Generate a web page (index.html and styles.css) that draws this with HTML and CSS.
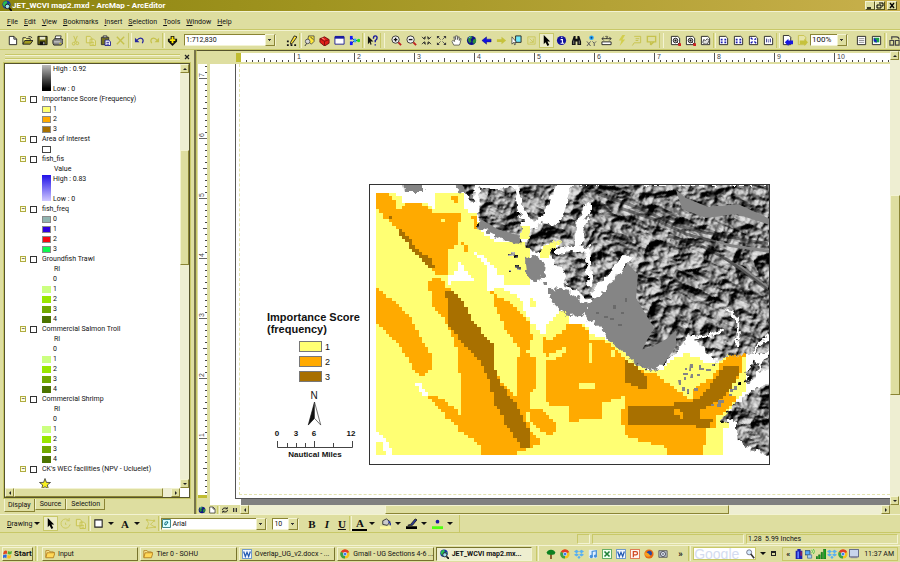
FILE: index.html
```
<!DOCTYPE html>
<html lang="en">
<head>
<meta charset="utf-8">
<title>JET_WCVI map2.mxd - ArcMap - ArcEditor</title>
<link rel="stylesheet" href="styles.css">
</head>
<body>
<svg class="defs" aria-hidden="true">
  <symbol id="i-globe" viewBox="0 0 12 12"><circle cx="6" cy="6" r="5" fill="#10108c"/><path d="M3 2l3-1 1 2-2 2 1 2-2 2-2-3zM8 5l3-1v3l-2 3-2-2z" fill="#2a8a3c"/><path d="M3 3l2-1" stroke="#7fd0ff"/></symbol>
  <symbol id="i-arc" viewBox="0 0 12 12"><circle cx="6" cy="5" r="4.500" fill="#1830a0"/><path d="M3 2l3-1 1 2-2 2 1 2-2 1-2-3zM8 4l2 0-1 3-1-1z" fill="#28c050"/><circle cx="7" cy="7" r="2.500" fill="#9fe0f0" stroke="#222"/><path d="M9 9l3 3" stroke="#111" stroke-width="2"/></symbol>
  <symbol id="i-new" viewBox="0 0 12 12"><path d="M2.500 1.500h5l3 3v6h-8z" fill="#fff" stroke="#222"/><path d="M7.500 1.500v3h3" fill="none" stroke="#222"/></symbol>
  <symbol id="i-open" viewBox="0 0 12 12"><path d="M1 10V3h3l1 1h4v2" fill="#ffff90" stroke="#222"/><path d="M1 10l2-4h9l-3 4z" fill="#a09a20" stroke="#222"/><path d="M7 2q2-1 4 1" fill="none" stroke="#222"/></symbol>
  <symbol id="i-save" viewBox="0 0 12 12"><path d="M1 1.500h10v9H1z" fill="#6b6a10" stroke="#111"/><path d="M3 2h6v3H3z" fill="#e8e8d0"/><path d="M3 7h6v4H3z" fill="#111"/><path d="M7 8h1v2H7z" fill="#fff"/></symbol>
  <symbol id="i-print" viewBox="0 0 12 12"><path d="M4 1h6L9 5H3z" fill="#fff" stroke="#333"/><path d="M1 6l2-2h7l2 1v4l-2 2H2L1 9z" fill="#888" stroke="#222"/><path d="M2 7h7v1H2z" fill="#ddd"/><path d="M8 9h2v1H8z" fill="#dd0"/></symbol>
  <symbol id="i-cut" viewBox="0 0 12 12"><path d="M4 1l3 7M8 1L5 8" stroke="#c6c24c" fill="none"/><circle cx="4" cy="9.500" r="1.500" fill="none" stroke="#c6c24c"/><circle cx="8" cy="9" r="1.500" fill="none" stroke="#c6c24c"/></symbol>
  <symbol id="i-copy" viewBox="0 0 12 12"><path d="M1.500 1.500h4l2 2v5h-6zM5.500 4.500h4l2 2v5h-6z" fill="#e6e4a8" stroke="#c6c24c"/><path d="M7 8h3M7 10h3" stroke="#c6c24c"/></symbol>
  <symbol id="i-paste" viewBox="0 0 12 12"><path d="M1.500 2.500h8v8h-8z" fill="#77731c" stroke="#333"/><path d="M3.500 1h4v2h-4z" fill="#ddd" stroke="#333"/><path d="M5.500 5.500h4l2 2v4h-6z" fill="#fff" stroke="#1c1c90"/><path d="M7 8h3M7 10h3" stroke="#1c1c90"/></symbol>
  <symbol id="i-x" viewBox="0 0 12 12"><path d="M2 2l8 8M10 2l-8 8" stroke="#c6c24c" stroke-width="1.500"/></symbol>
  <symbol id="i-undo" viewBox="0 0 12 12"><path d="M3 6q3-4 6-2 2 2 0 5" fill="none" stroke="#2626a0" stroke-width="1.300"/><path d="M1 3v5h5z" fill="#2626a0"/></symbol>
  <symbol id="i-redo" viewBox="0 0 12 12"><path d="M9 6Q6 2 3 4q-2 2 0 5" fill="none" stroke="#c6c24c" stroke-width="1.300"/><path d="M11 3v5H6z" fill="#c6c24c"/></symbol>
  <symbol id="i-add" viewBox="0 0 12 12"><path d="M4 1h4v3h3v3L6 12 1 7V4h3z" fill="#111"/><path d="M6 2v7M3 5.500h6" stroke="#ffe800" stroke-width="2"/></symbol>
  <symbol id="i-edit" viewBox="0 0 12 12"><path d="M1 10h2v2H1zM5 10h2v2H5zM9 10h2v2H9zM1 6h2v2H1z" fill="#111"/><path d="M5 8l4-7 3 1-5 7-2 1z" fill="#ffe030" stroke="#222"/></symbol>
  <symbol id="i-cat" viewBox="0 0 12 12"><path d="M5 1h6v6l-3 3-4-4z" fill="#ffe838" stroke="#554"/><circle cx="4" cy="7" r="2.500" fill="#d8d8d8" stroke="#555"/><path d="M3 9l-2 3M7 2l3 3" stroke="#333"/></symbol>
  <symbol id="i-box" viewBox="0 0 12 12"><path d="M1 4l5-2 5 3v4l-5 3-5-4z" fill="#e02018" stroke="#701010"/><path d="M1 4l5 3 5-2M6 7v5" stroke="#801010" fill="none"/><path d="M3 3l3 2" stroke="#ffb0a0"/></symbol>
  <symbol id="i-cmd" viewBox="0 0 12 12"><path d="M1 2h10v8H1z" fill="#fff" stroke="#1c1c90"/><path d="M1 1h10v3H1z" fill="#1c1ca0"/></symbol>
  <symbol id="i-model" viewBox="0 0 12 12"><path d="M3 3l3 3M3 9l3-3h4" stroke="#222" fill="none"/><path d="M1 1h3v4H1z" fill="#1818ff"/><path d="M1 7h3v4H1z" fill="#1818ff"/><path d="M5 4h3v4H5z" fill="#30a8ff"/><circle cx="10.500" cy="6" r="1.800" fill="#20e020"/></symbol>
  <symbol id="i-help" viewBox="0 0 12 12"><path d="M1 1v9l2-2 1 3 1-1-1-3h3z" fill="#111"/><path d="M7 4q0-3 2-3t2 2-2 3v2M9 10v1.500" fill="none" stroke="#18189c" stroke-width="1.500"/></symbol>
  <symbol id="i-zin" viewBox="0 0 12 12"><circle cx="5" cy="5" r="4" fill="#f4f4f4" stroke="#333"/><path d="M3 5h4M5 3v4" stroke="#111" stroke-width="1.500"/><path d="M8 8l3 3" stroke="#c02020" stroke-width="2"/></symbol>
  <symbol id="i-zout" viewBox="0 0 12 12"><circle cx="5" cy="5" r="4" fill="#f4f4f4" stroke="#333"/><path d="M3 5h4" stroke="#111" stroke-width="1.500"/><path d="M8 8l3 3" stroke="#c02020" stroke-width="2"/></symbol>
  <symbol id="i-fin" viewBox="0 0 12 12"><path d="M1 2l3 3M11 2L8 5M1 10l3-3M11 10L8 7" stroke="#333"/><path d="M2 4h3V1zM10 4H7V1zM2 8h3v3zM10 8H7v3z" fill="#222"/></symbol>
  <symbol id="i-fout" viewBox="0 0 12 12"><path d="M1 1h3L1 4zM11 1H8l3 3zM1 11h3L1 8zM11 11H8l3-3z" fill="#333"/><path d="M2 2l3 3M10 2L7 5M2 10l3-3M10 10L7 7" stroke="#555"/></symbol>
  <symbol id="i-pan" viewBox="0 0 12 12"><path d="M3 11L1 7l1-1 2 1-1-5h1l1 3V1h2v4l1-3h1v4l1-2h1l-1 5-1 2z" fill="#fff" stroke="#444" stroke-width=".8"/></symbol>
  <symbol id="i-back" viewBox="0 0 12 12"><path d="M1 6l5-4v2.500h5v3H6V10z" fill="#1010e0" stroke="#101070" stroke-width=".5"/></symbol>
  <symbol id="i-fwd" viewBox="0 0 12 12"><path d="M11 6L6 2v2.500H1v3h5V10z" fill="#c6c23c"/></symbol>
  <symbol id="i-selfeat" viewBox="0 0 12 12"><path d="M5 1h6v7H5z" fill="#70e8f8" stroke="#222"/><path d="M1 2v8l2-2 1 3 1-1-1-2h2z" fill="#fff" stroke="#222" stroke-width=".7"/></symbol>
  <symbol id="i-clear" viewBox="0 0 12 12"><path d="M2 2h8v8H2zM4 4l4 4M8 4v4H4" fill="none" stroke="#ccc85c"/></symbol>
  <symbol id="i-arrow" viewBox="0 0 12 12"><path d="M3 0v10l2-2 2 4 2-1-2-4h3z" fill="#000"/></symbol>
  <symbol id="i-info" viewBox="0 0 12 12"><circle cx="6" cy="6" r="5" fill="#10109c"/><path d="M5 5h2v4M5 9h4M5.500 2.500h1.500" stroke="#fff" stroke-width="1.200" fill="none"/></symbol>
  <symbol id="i-find" viewBox="0 0 12 12"><path d="M3 1h2v3h2V1h2l2 6v4H7V7H5v4H1V7z" fill="#111"/><path d="M3 6v4M9 6v4" stroke="#888"/></symbol>
  <symbol id="i-xy" viewBox="0 0 12 12"><circle cx="6" cy="3" r="2.500" fill="#28a8f8"/><circle cx="6" cy="3" r="1" fill="#104080"/><path d="M1 7l4 5M5 7l-4 5M7 7l2 2 2-2M9 9v3" stroke="#555" fill="none"/></symbol>
  <symbol id="i-meas" viewBox="0 0 12 12"><path d="M1 7.500h10v3H1z" fill="#fff" stroke="#222"/><path d="M1 4h10M3 2L1 4l2 2M9 2l2 2-2 2" fill="none" stroke="#333"/><path d="M5 2q1-2 2 0l-1 2" fill="none" stroke="#222"/></symbol>
  <symbol id="i-bolt" viewBox="0 0 12 12"><path d="M7 0L3 6h3l-2 6 6-7H7l3-5z" fill="#d2ce4c"/></symbol>
  <symbol id="i-html" viewBox="0 0 12 12"><path d="M3.500 1.500h7v7h-7l-2 3M5 4h4M5 6h3" fill="none" stroke="#c6c24c"/></symbol>
  <symbol id="i-view" viewBox="0 0 12 12"><path d="M1.500 1.500h9v6h-9zM5 7v4M5 11l4-4" fill="none" stroke="#c6c24c" stroke-width="1.500"/></symbol>
  <symbol id="i-pzin" viewBox="0 0 12 12"><path d="M1.500 1.500h7l2 2v7h-9z" fill="#fff" stroke="#222"/><circle cx="6" cy="6" r="2.500" fill="#bbb" stroke="#222"/><path d="M6 5v2M5 6h2M8 8l2 2" stroke="#111"/><path d="M9 9h3v3H9z" fill="#d02020"/></symbol>
  <symbol id="i-ppan" viewBox="0 0 12 12"><path d="M1.500 1.500h7l2 2v7h-9z" fill="#fff" stroke="#222"/><path d="M3 8l1-3 2 1 2-2 2 2-2 4H5z" fill="#ddd" stroke="#444"/></symbol>
  <symbol id="i-pfull" viewBox="0 0 12 12"><path d="M1.500 1.500h7l2 2v7h-9z" fill="#fff" stroke="#222"/><path d="M3 4h2v2H3zM7 4h2v2H7zM3 7h2v2H3zM7 7h2v2H7z" fill="#1c1cb0"/></symbol>
  <symbol id="i-pext" viewBox="0 0 12 12"><path d="M1.500 1.500h7l2 2v7h-9z" fill="#fff" stroke="#222"/><path d="M3 3l2 2M9 4L7 5M3 9l2-2M9 9L7 7" stroke="#1c1cb0" stroke-width="1.500"/></symbol>
  <symbol id="i-p11" viewBox="0 0 12 12"><path d="M1.500 1.500h7l2 2v7h-9z" fill="#fff" stroke="#222"/><path d="M4 4v4M8 4v4M6 5v1M6 7v1" stroke="#1c1c80"/></symbol>
  <symbol id="i-pback" viewBox="0 0 12 12"><path d="M1.500 .5h6l2 2v8h-8z" fill="#fff" stroke="#222"/><path d="M3 8l4-4v2h5v4H7v2z" fill="#1818e0"/></symbol>
  <symbol id="i-pfwd" viewBox="0 0 12 12"><path d="M1.500 .5h6l2 2v8h-8z" fill="#e6e4a8" stroke="#c6c24c"/><path d="M12 8L8 4v2H3v4h5v2z" fill="#c6c23c"/></symbol>
  <symbol id="i-draft" viewBox="0 0 12 12"><path d="M1.500 1.500h9v9h-9z" fill="#fff" stroke="#222"/><path d="M3 4h6M3 6h6M3 8h6" stroke="#888"/></symbol>
  <symbol id="i-focus" viewBox="0 0 12 12"><path d="M1.500 1.500h9v9h-9z" fill="#fff" stroke="#222"/><path d="M3 3h6v5H3z" fill="#18a048"/><path d="M3 3l3 3v3l-3-3z" fill="#1818d0"/></symbol>
  <symbol id="i-layout" viewBox="0 0 12 12"><path d="M3 5V2h5q3 0 3 3M1 6h4v5H1zM7 6h4v5H7z" fill="none" stroke="#444" stroke-width="1.300"/></symbol>
  <symbol id="i-rot" viewBox="0 0 12 12"><path d="M10 3a5 5 0 1 0 1 4M10 0v3H7M6 5v2h1" fill="none" stroke="#ccc85c"/></symbol>
  <symbol id="i-sq" viewBox="0 0 12 12"><path d="M2 2h8v8H2z" fill="#fff" stroke="#222" stroke-width="1.200"/></symbol>
  <symbol id="i-nodes" viewBox="0 0 12 12"><path d="M2 2l8 1-4 4 5 3-9 1 2-5z" fill="none" stroke="#ccc85c"/><path d="M1 1h2v2H1zM9 2h2v2H9zM1 10h2v2H1zM10 9h2v2h-2z" fill="#ccc85c"/></symbol>
  <symbol id="i-fill" viewBox="0 0 12 12"><path d="M3 3l4-2 4 3-3 4-5-1z" fill="#ccc" stroke="#333"/><path d="M9 4q3 1 2 4" fill="none" stroke="#2030a0" stroke-width="1.500"/><path d="M0 9h12v3H0z" fill="#fdf9a0"/></symbol>
  <symbol id="i-line" viewBox="0 0 12 12"><path d="M2 8l3-1 5-6 2 1-5 6z" fill="#2838a0" stroke="#222"/><path d="M0 9h12v3H0z" fill="#000"/></symbol>
  <symbol id="i-dot" viewBox="0 0 12 12"><circle cx="6" cy="4" r="2" fill="#1818a0"/><path d="M0 9h12v3H0z" fill="#50ff10"/></symbol>
  <symbol id="i-win" viewBox="0 0 12 12"><path d="M1 3q2-2 4-.5L4.500 6Q3 5 0 6.500z" fill="#e04820"/><path d="M6 2.500q3 1.500 5-.5l-1 4q-2 1-4.500 0z" fill="#58b030"/><path d="M0 7.500Q3 6 4.500 7L4 11Q2 9.500 0 11z" fill="#3068e0"/><path d="M5.500 7q2 1.500 4.500 0l-1 4q-2 1-4 0z" fill="#f8c020"/></symbol>
  <symbol id="i-folder" viewBox="0 0 12 12"><path d="M1 10V2h4l1 1.500h4V5" fill="#fff2a0" stroke="#b07818"/><path d="M1 10.500l1.500-6H12l-2 6z" fill="#ffd858" stroke="#b07818"/></symbol>
  <symbol id="i-word" viewBox="0 0 12 12"><path d="M.5.5h11v11H.5z" fill="#f2f7ff" stroke="#4a80c8"/><path d="M2 3l2 6 2-5 2 5 2-6" fill="none" stroke="#2058b0" stroke-width="1.500"/></symbol>
  <symbol id="i-chrome" viewBox="0 0 12 12"><circle cx="6" cy="6" r="5.500" fill="#f0c420"/><path d="M6 6L1 3.300A5.500 5.500 0 0 1 11 3.500z" fill="#e03c28"/><path d="M6 6L1 3.300A5.500 5.500 0 0 0 6 11.500z" fill="#3aa048"/><circle cx="6" cy="6" r="2.500" fill="#fff"/><circle cx="6" cy="6" r="1.900" fill="#4080e8"/></symbol>
  <symbol id="i-tree" viewBox="0 0 12 12"><path d="M5 6h2v6H5z" fill="#7a4a18"/><path d="M1 4q1-3 5-3t5 3q0 3-3 3H4Q1 7 1 4z" fill="#0c8020"/></symbol>
  <symbol id="i-drop" viewBox="0 0 12 12"><path d="M3 1l3 2-3 2-3-2zM9 1l3 2-3 2-3-2zM3 5l3 2-3 2-3-2zM9 5l3 2-3 2-3-2zM6 8l2 2-2 2-2-2z" fill="#58b0f0"/></symbol>
  <symbol id="i-music" viewBox="0 0 12 12"><path d="M1 1h10v10H1z" fill="#e0efff"/><path d="M5 9V3l5-1v6" fill="none" stroke="#4890d8" stroke-width="1.500"/><circle cx="4" cy="9" r="2" fill="#4890d8"/><circle cx="9" cy="8.500" r="2" fill="#4890d8"/></symbol>
  <symbol id="i-excel" viewBox="0 0 12 12"><path d="M.5.5h11v11H.5z" fill="#f2fff2" stroke="#3c9848"/><path d="M3 3l6 6M9 3L3 9" stroke="#208038" stroke-width="2"/></symbol>
  <symbol id="i-ppt" viewBox="0 0 12 12"><path d="M.5.5h11v11H.5z" fill="#fff4f0" stroke="#d85830"/><path d="M4 10V3h3q2 0 2 2T7 7H4" fill="none" stroke="#d04820" stroke-width="1.500"/></symbol>
  <symbol id="i-fox" viewBox="0 0 12 12"><circle cx="6" cy="6" r="5.500" fill="#e86a10"/><circle cx="6.500" cy="5" r="3" fill="#2848a0"/><path d="M1 4q2 1 4 1l3 3q-4 3-7-1z" fill="#f8a020"/></symbol>
  <symbol id="i-cam" viewBox="0 0 12 12"><path d="M1 2h10v8H1z" fill="#b8c0c8" stroke="#555"/><circle cx="6" cy="6" r="3" fill="#e8f0f8" stroke="#334"/><circle cx="6" cy="6" r="1" fill="#224"/></symbol>
  <symbol id="i-search" viewBox="0 0 12 12"><circle cx="5" cy="4" r="3" fill="#d8ecff" stroke="#667"/><path d="M7 6l4 5" stroke="#333" stroke-width="2"/></symbol>
  <symbol id="i-batt" viewBox="0 0 12 12"><path d="M4 0h4v2h2v10H2V2h2z" fill="#1c20b0"/><path d="M4 3h2v8H4z" fill="#6080ff"/><path d="M8 3h1v5H8z" fill="#e02020"/></symbol>
  <symbol id="i-net" viewBox="0 0 12 12"><path d="M0 2h6v5H0z" fill="#58a8f8" stroke="#246"/><path d="M3 7h5v4H3z" fill="#a8d0f8" stroke="#579"/><path d="M8 1q2 2 0 4M10 0q3 3 0 6" fill="none" stroke="#40c040"/></symbol>
  <symbol id="i-bars" viewBox="0 0 12 12"><path d="M0 9h2v3H0zM3 7h2v5H3zM6 4h2v8H6zM9 0h3v12H9z" fill="#1aa020" stroke="#0a5010" stroke-width=".5"/></symbol>
  <symbol id="i-mon" viewBox="0 0 12 12"><path d="M.5.500h11v9H.5z" fill="#c8d4ec" stroke="#444c78"/><path d="M2 9h8v2H2z" fill="#889"/></symbol>
  <symbol id="i-refresh" viewBox="0 0 12 12"><path d="M2 6q1-4 5-3l2 1M10 6q-1 4-5 3l-2-1" fill="none" stroke="#222" stroke-width="1.500"/><path d="M10 1v4H6zM2 11V7h4z" fill="#222"/></symbol>
  <symbol id="i-pause" viewBox="0 0 12 12"><path d="M3 3h2v6H3zM7 3h2v6H7z" fill="#333"/></symbol>
</svg>

<div class="app">
  <header class="titlebar">
    <svg class="ico"><use href="#i-arc"/></svg>
    <h1>JET_WCVI map2.mxd - ArcMap - ArcEditor</h1>
    <div class="winbtns">
      <button aria-label="Minimize"><svg viewBox="0 0 8 7"><path d="M1 6h4" stroke="#000" stroke-width="1.500"/></svg></button>
      <button aria-label="Restore"><svg viewBox="0 0 8 7"><path d="M3 1h4v3H6M1 3h4v3H1z" fill="none" stroke="#000"/></svg></button>
      <button class="close" aria-label="Close"><svg viewBox="0 0 8 7"><path d="M2 1l4 5M6 1L2 6" stroke="#000" stroke-width="1.300"/></svg></button>
    </div>
  </header>

  <nav class="menubar">
    <a href="#"><u>F</u>ile</a><a href="#"><u>E</u>dit</a><a href="#"><u>V</u>iew</a><a href="#"><u>B</u>ookmarks</a><a href="#"><u>I</u>nsert</a><a href="#"><u>S</u>election</a><a href="#"><u>T</u>ools</a><a href="#"><u>W</u>indow</a><a href="#"><u>H</u>elp</a>
  </nav>

  <div class="toolbar">
    <button aria-label="New"><svg><use href="#i-new"/></svg></button>
    <button aria-label="Open"><svg><use href="#i-open"/></svg></button>
    <button aria-label="Save"><svg><use href="#i-save"/></svg></button>
    <button aria-label="Print"><svg><use href="#i-print"/></svg></button>
    <i class="sep"></i>
    <button aria-label="Cut"><svg><use href="#i-cut"/></svg></button>
    <button aria-label="Copy"><svg><use href="#i-copy"/></svg></button>
    <button aria-label="Paste"><svg><use href="#i-paste"/></svg></button>
    <button aria-label="Delete"><svg><use href="#i-x"/></svg></button>
    <i class="sep wide"></i>
    <button aria-label="Undo"><svg><use href="#i-undo"/></svg></button>
    <button aria-label="Redo"><svg><use href="#i-redo"/></svg></button>
    <i class="sep"></i>
    <button aria-label="Add data"><svg><use href="#i-add"/></svg></button>
    <span class="combo scale"><select aria-label="Map scale"><option>1:712,830</option></select></span>
    <button aria-label="Editor"><svg><use href="#i-edit"/></svg></button>
    <i class="sep"></i>
    <button aria-label="Catalog"><svg><use href="#i-cat"/></svg></button>
    <button aria-label="Toolbox"><svg><use href="#i-box"/></svg></button>
    <button aria-label="Command line"><svg><use href="#i-cmd"/></svg></button>
    <button aria-label="Model"><svg><use href="#i-model"/></svg></button>
    <i class="sep"></i>
    <button aria-label="What's this"><svg><use href="#i-help"/></svg></button>
    <i class="sep grip"></i>
    <button aria-label="Zoom in"><svg><use href="#i-zin"/></svg></button>
    <button aria-label="Zoom out"><svg><use href="#i-zout"/></svg></button>
    <button aria-label="Fixed zoom in"><svg><use href="#i-fin"/></svg></button>
    <button aria-label="Fixed zoom out"><svg><use href="#i-fout"/></svg></button>
    <button aria-label="Pan"><svg><use href="#i-pan"/></svg></button>
    <button aria-label="Full extent"><svg><use href="#i-globe"/></svg></button>
    <button aria-label="Back"><svg><use href="#i-back"/></svg></button>
    <button aria-label="Forward"><svg><use href="#i-fwd"/></svg></button>
    <button aria-label="Select features"><svg><use href="#i-selfeat"/></svg></button>
    <button aria-label="Clear selection"><svg><use href="#i-clear"/></svg></button>
    <button class="on" aria-label="Select elements"><svg><use href="#i-arrow"/></svg></button>
    <button aria-label="Identify"><svg><use href="#i-info"/></svg></button>
    <button aria-label="Find"><svg><use href="#i-find"/></svg></button>
    <button aria-label="Go to XY"><svg><use href="#i-xy"/></svg></button>
    <button aria-label="Measure"><svg><use href="#i-meas"/></svg></button>
    <button aria-label="Hyperlink"><svg><use href="#i-bolt"/></svg></button>
    <button aria-label="HTML popup"><svg><use href="#i-html"/></svg></button>
    <button aria-label="Viewer"><svg><use href="#i-view"/></svg></button>
    <i class="sep grip"></i>
    <button aria-label="Page zoom in"><svg><use href="#i-pzin"/></svg></button>
    <button aria-label="Page zoom out"><svg><use href="#i-pzin"/></svg></button>
    <button aria-label="Page pan"><svg><use href="#i-ppan"/></svg></button>
    <i class="sep"></i>
    <button aria-label="Page fixed zoom in"><svg><use href="#i-pfull"/></svg></button>
    <button aria-label="Page fixed zoom out"><svg><use href="#i-pfull"/></svg></button>
    <button aria-label="Whole page"><svg><use href="#i-pext"/></svg></button>
    <button aria-label="Zoom 100%"><svg><use href="#i-p11"/></svg></button>
    <i class="sep wide"></i>
    <button aria-label="Previous page extent"><svg><use href="#i-pback"/></svg></button>
    <button aria-label="Next page extent"><svg><use href="#i-pfwd"/></svg></button>
    <span class="combo pct"><select aria-label="Page zoom"><option>100%</option></select></span>
    <button aria-label="Draft mode"><svg><use href="#i-draft"/></svg></button>
    <button aria-label="Focus data frame"><svg><use href="#i-focus"/></svg></button>
    <i class="sep"></i>
    <button aria-label="Change layout"><svg><use href="#i-layout"/></svg></button>
  </div>

  <main class="work">
    <aside class="toc">
      <div class="dockbar"><i></i><button aria-label="Close panel"><svg viewBox="0 0 6 6"><path d="M1 1l4 4M5 1L1 5" stroke="#222" stroke-width="1.200"/></svg></button></div>
      <div class="treebox">
        <ul class="tree">
          <li class="ramp-row"><i class="ramp gray"></i><span class="hl"><b>High : 0.92</b><b>Low : 0</b></span></li>
          <li class="layer"><button>−</button><label><input type="checkbox">Importance Score (Frequency)</label></li>
          <li class="cls"><i class="sw c1"></i>1</li>
          <li class="cls"><i class="sw c2"></i>2</li>
          <li class="cls"><i class="sw c3"></i>3</li>
          <li class="layer"><button>−</button><label><input type="checkbox">Area of Interest</label></li>
          <li class="cls"><i class="sw hollow"></i></li>
          <li class="layer"><button>−</button><label><input type="checkbox">fish_fis</label></li>
          <li class="field">Value</li>
          <li class="ramp-row"><i class="ramp blue"></i><span class="hl"><b>High : 0.83</b><b>Low : 0</b></span></li>
          <li class="layer"><button>−</button><label><input type="checkbox">fish_freq</label></li>
          <li class="cls"><i class="sw f0"></i>0</li>
          <li class="cls"><i class="sw f1"></i>1</li>
          <li class="cls"><i class="sw f2"></i>2</li>
          <li class="cls"><i class="sw f3"></i>3</li>
          <li class="layer"><button>−</button><label><input type="checkbox">Groundfish Trawl</label></li>
          <li class="field">RI</li>
          <li class="cls"><i class="sw none"></i>0</li>
          <li class="cls"><i class="sw flat g1"></i>1</li>
          <li class="cls"><i class="sw flat g2"></i>2</li>
          <li class="cls"><i class="sw flat g3"></i>3</li>
          <li class="cls"><i class="sw flat g4"></i>4</li>
          <li class="layer"><button>−</button><label><input type="checkbox">Commercial Salmon Troll</label></li>
          <li class="field">RI</li>
          <li class="cls"><i class="sw none"></i>0</li>
          <li class="cls"><i class="sw flat g1"></i>1</li>
          <li class="cls"><i class="sw flat g2"></i>2</li>
          <li class="cls"><i class="sw flat g3"></i>3</li>
          <li class="cls"><i class="sw flat g4"></i>4</li>
          <li class="layer"><button>−</button><label><input type="checkbox">Commercial Shrimp</label></li>
          <li class="field">RI</li>
          <li class="cls"><i class="sw none"></i>0</li>
          <li class="cls"><i class="sw flat g1"></i>1</li>
          <li class="cls"><i class="sw flat g2"></i>2</li>
          <li class="cls"><i class="sw flat g3"></i>3</li>
          <li class="cls"><i class="sw flat g4"></i>4</li>
          <li class="layer"><button>−</button><label><input type="checkbox">CK's WEC facilities (NPV - Ucluelet)</label></li>
          <li class="star"><svg viewBox="0 0 12 12"><path d="M6 .5l1.400 3.900 4.100.1-3.200 2.500 1.100 4L6 8.700 2.600 11l1.100-4L.5 4.500l4.100-.1z" fill="#f8f020" stroke="#333" stroke-width=".8"/></svg></li>
        </ul>
        <div class="vbar"><button class="up" aria-label="Scroll up"></button><i class="gap-a"></i><i class="thumb"></i><i class="gap-b"></i><button class="down" aria-label="Scroll down"></button></div>
        <div class="hbar"><button class="left" aria-label="Scroll left"></button><i class="thumb"></i><i class="gap-a"></i><button class="right" aria-label="Scroll right"></button></div>
      </div>
      <div class="tabs"><button class="cur">Display</button><button>Source</button><button>Selection</button></div>
    </aside>

    <section class="view">
      <svg class="hruler"><defs>
        <pattern id="hm" x="-1" width="6" height="9" patternUnits="userSpaceOnUse"><path d="M0 7h1v2H0z" fill="#444"/></pattern>
        <pattern id="hh" x="23" width="60" height="9" patternUnits="userSpaceOnUse"><path d="M0 5h1v4H0z" fill="#555"/><path d="M30 0h1v9h-1z" fill="#555"/></pattern></defs>
        <rect width="100%" height="9" fill="#fff"/><rect width="100%" height="9" fill="url(#hm)"/><rect width="100%" height="9" fill="url(#hh)"/>
        <g><text x="56" y="6">1</text><text x="116" y="6">2</text><text x="176" y="6">3</text><text x="236" y="6">4</text><text x="296" y="6">5</text><text x="356" y="6">6</text><text x="416" y="6">7</text><text x="476" y="6">8</text><text x="536" y="6">9</text><text x="596" y="6">10</text></g>
      </svg>
      <svg class="vruler"><defs>
        <pattern id="vm" y="2" width="9" height="6" patternUnits="userSpaceOnUse"><path d="M7 0h2v1H7z" fill="#444"/></pattern>
        <pattern id="vh" y="14" width="9" height="60" patternUnits="userSpaceOnUse"><path d="M1 0h8v1H1z" fill="#666"/><path d="M5 30h4v1H5z" fill="#555"/></pattern></defs>
        <rect width="9" height="100%" fill="#fff"/><rect width="9" height="100%" fill="url(#vm)"/><rect width="9" height="100%" fill="url(#vh)"/>
        <g><text transform="translate(6 13) rotate(-90)">7</text><text transform="translate(6 73) rotate(-90)">6</text><text transform="translate(6 133) rotate(-90)">5</text><text transform="translate(6 193) rotate(-90)">4</text><text transform="translate(6 253) rotate(-90)">3</text><text transform="translate(6 313) rotate(-90)">2</text><text transform="translate(6 373) rotate(-90)">1</text></g>
      </svg>
      <div class="desk">
        <div class="page">
          <div class="sheet">
            <section class="legend">
              <h2>Importance Score<br>(frequency)</h2>
              <ul>
                <li><i class="c1"></i>1</li>
                <li><i class="c2"></i>2</li>
                <li><i class="c3"></i>3</li>
              </ul>
              <div class="north">N<svg viewBox="0 0 15 25"><path d="M7.500 0L1 24l6.500-7z" fill="#111" stroke="#111" stroke-width=".7"/><path d="M7.500 0L14 24l-6.500-7z" fill="#fff" stroke="#333" stroke-width=".7"/></svg></div>
              <div class="scalebar">
                <div class="nums"><span>0</span><span>3</span><span>6</span><span>12</span></div>
                <svg viewBox="0 0 76 7"><path d="M.5 0v6.500h75V0M10.500 2v4M19.500 2v4M28.500 2v4M37.500 0v6M56.500 2v4" fill="none" stroke="#444"/></svg>
                <p>Nautical Miles</p>
              </div>
            </section>
            <svg class="map" id="map" viewBox="369 184 401 281" role="img" aria-label="Importance score map">
              <defs>
                <filter id="rough" x="0" y="0" width="1" height="1"><feTurbulence type="fractalNoise" baseFrequency=".16" numOctaves="3" seed="4"/><feDisplacementMap in="SourceGraphic" scale="9" xChannelSelector="R" yChannelSelector="G"/></filter>
                <filter id="relief" x="0" y="0" width="1" height="1" color-interpolation-filters="sRGB"><feTurbulence type="turbulence" baseFrequency=".036 .05" numOctaves="4" seed="11"/><feColorMatrix values="0 0 0 0 0  0 0 0 0 0  0 0 0 0 0  0 0 0 -1 1"/><feDiffuseLighting surfaceScale="8" diffuseConstant="1" lighting-color="#e4e4e4"><feDistantLight azimuth="205" elevation="38"/></feDiffuseLighting></filter>
                <mask id="land" maskUnits="userSpaceOnUse" x="369" y="184" width="401" height="281">
                  <g filter="url(#rough)">
                    <rect x="369" y="184" width="401" height="281" fill="#000"/>
                    <path fill="#fff" d="M404 180h20v11h-19zM450 180h25l-1 23-11-9zM479 187l12 3 23-3 4 25 4 22-3 10-16-4-14-8-11-4zM518 180h40l-13 32-12 11-9-14zM530 231l12-8 14 2 8-10 8-30h200v165l-16 3h-11l-9 3-7-1-12 7-8-9-13-12-9-8-3 10-13 15-17 13-15-5-15-13-15-13-10-13-17-12-14 1-14-12-5-11 8-7 5 4 5-7-5-17-9-1-2-14 10-9-13 2-13 8-10-6zM526 258l10-2 10 8-2 12-9 6-8-7zM718 422l9-9 16-15 13-10 16-6v75l-24-10-10-5-3-22-13 2zM744 381l6-13 8-7 1 8-7 13zM759 372l5-14 8-4v14z"/>
                    <path fill="none" stroke="#000" d="M588 205l-7 18-3 25" stroke-width="7"/>
                    <path fill="none" stroke="#000" d="M556 250l34-1M588 250l2 36M558 286l12 4 20 14" stroke-width="5"/>
                    <path fill="none" stroke="#000" d="M592 296l12-10 10-14 15-16" stroke-width="8"/>
                    <path fill="none" stroke="#000" d="M728 308l11 14-2 24M690 338l22-3 12-4M752 352l18-17M548 214l14-2" stroke-width="3"/>
                  </g>
                  <path fill="#fff" d="M508 254h3v-2h4v3h3v3h-4v-2h-6zM515 265h4v2h2v3h-4v-2h-2zM509 270h2v2h-2zM543 282h4v3h-3zM548 288h3v6h-3zM520 219h5v3h-5zM685 368h2v2h-2zM690 364h3v4h-2v3h-2zM699 365h2v3h3v2h-5zM706 369h5v2h-5zM683 373h5v2h-5zM691 374h2v4h-3zM697 374h3v2h-3zM678 380h3v5h-2zM684 377h2v3h-2zM682 387h3v4h-3zM687 389h2v5h-2zM694 388h4v3h-4zM712 364h3v2h-3zM730 389h4v-3h3v4h-4v2h-3zM718 400h6v3h-3v4h-4v-3h1zM711 404h3v2h-3zM729 394h3v2h-3zM738 382h3v3h-3z"/>
                </mask>
              </defs>
              <rect x="369" y="184" width="401" height="281" fill="#fff"/>
              <g id="cells" shape-rendering="crispEdges"></g>
              <g mask="url(#land)">
                <g transform="rotate(24 570 320)"><rect x="340" y="60" width="480" height="500" filter="url(#relief)"/></g>
                <g fill="#858585">
                  <path d="M520 254h30l8 26 32 22 14-14 24-24 10 10-2 24 12 20 6 10-8 14-6 12-4 12 6 8-18-2-22-14-30-32-34-10z"/>
                  <path d="M640 350l14-4 14-8 8-8v16l-20 30-20-14z"/>
                  <path d="M404 184h20v10h-20zM450 184h12l8 18h-6zM479 218l20 12 22 6-2 10-40-14z"/>
                  <path d="M680 362h34v30h-38zM714 386h28l-22 30-12-8z"/>
                  <path d="M676 190l10 8 22 9 30-3 32 15v6l-34-11-30 4-24-9zM690 234l40 10 40 6v3l-40-6zM718 256l24 10 26 20v4l-28-20z"/>
                </g>
                <g fill="none" stroke="#222" stroke-linejoin="round" stroke-width="3" opacity=".5"><path d="M598 194l30 10 20 8 24 12 30 8 66 12M620 208l36 12 30 14 30 8M668 236l30 8 30 16 40 30"/></g>
                <path d="M596 312h3v2h-3zM604 316h4v2h-4zM613 305h3v4h-3zM610 318h4v2h-4zM621 312h3v2h-3zM618 324h4v2h-4zM625 298h2v4h-2z" fill="#6a6a6a"/>
              </g>
              <rect x="369.500" y="184.500" width="400" height="280" fill="none" stroke="#333"/>
            </svg>
          </div>
        </div>
        <div class="shade"></div>
      </div>
      <div class="vbar big"><button class="up" aria-label="Scroll map up"></button><i class="gap-a"></i><i class="thumb"></i><i class="gap-b"></i><button class="down" aria-label="Scroll map down"></button></div>
      <div class="viewbtns">
        <button aria-label="Data view"><svg><use href="#i-globe"/></svg></button><button class="on" aria-label="Layout view"><svg><use href="#i-new"/></svg></button><i class="sep"></i><button aria-label="Refresh"><svg><use href="#i-refresh"/></svg></button><button aria-label="Pause"><svg><use href="#i-pause"/></svg></button>
        <div class="hbar big"><button class="left" aria-label="Scroll map left"></button><i class="gap-a"></i><i class="thumb"></i><i class="gap-b"></i><button class="right" aria-label="Scroll map right"></button></div>
      </div>
    </section>
  </main>

  <div class="drawbar">
    <button class="txt"><u>D</u>rawing</button><i class="dd"></i>
    <button class="on" aria-label="Select"><svg><use href="#i-arrow"/></svg></button>
    <button aria-label="Rotate"><svg><use href="#i-rot"/></svg></button>
    <button aria-label="Group"><svg><use href="#i-copy"/></svg></button>
    <i class="sep"></i>
    <button aria-label="Rectangle"><svg><use href="#i-sq"/></svg></button><i class="dd"></i>
    <button class="ser" aria-label="Text">A</button><i class="dd"></i>
    <button aria-label="Edit vertices"><svg><use href="#i-nodes"/></svg></button>
    <i class="sep"></i>
    <span class="combo font"><svg viewBox="0 0 9 9"><path d="M.5.5h8v8h-8z" fill="#dff" stroke="#488"/><path d="M3 6q-1-4 3-3-2 4-3 3" fill="none" stroke="#067"/></svg><select aria-label="Font"><option>Arial</option></select></span>
    <span class="combo size"><select aria-label="Font size"><option>10</option></select></span>
    <button class="ser b" aria-label="Bold">B</button><button class="ser it" aria-label="Italic">I</button><button class="ser un" aria-label="Underline">U</button>
    <i class="sep"></i>
    <button class="ser fc" aria-label="Font color">A</button><i class="dd"></i>
    <button aria-label="Fill color"><svg><use href="#i-fill"/></svg></button><i class="dd"></i>
    <button aria-label="Line color"><svg><use href="#i-line"/></svg></button><i class="dd"></i>
    <button aria-label="Marker color"><svg><use href="#i-dot"/></svg></button><i class="dd"></i>
    <i class="end"></i>
  </div>

  <div class="status"><i></i><i class="wide"></i><output>1.28&nbsp; 5.99 Inches</output></div>

  <footer class="taskbar">
    <button class="start"><svg><use href="#i-win"/></svg>Start</button>
    <i class="sep"></i>
    <div class="tasks">
      <button><svg><use href="#i-folder"/></svg>Input</button>
      <button><svg><use href="#i-folder"/></svg>Tier 0 - SOHU</button>
      <button><svg><use href="#i-word"/></svg>Overlap_UG_v2.docx - ...</button>
      <button><svg><use href="#i-chrome"/></svg>Gmail - UG Sections 4-6 ...</button>
      <button class="act"><svg><use href="#i-arc"/></svg>JET_WCVI map2.mx...</button>
    </div>
    <i class="sep"></i>
    <div class="quick">
      <svg><use href="#i-tree"/></svg><svg><use href="#i-chrome"/></svg><svg><use href="#i-drop"/></svg><svg><use href="#i-music"/></svg><svg><use href="#i-excel"/></svg><svg><use href="#i-word"/></svg><svg><use href="#i-ppt"/></svg><svg><use href="#i-fox"/></svg><svg><use href="#i-cam"/></svg>
    </div>
    <b class="more">»</b>
    <i class="sep"></i>
    <label class="goog"><input type="text" placeholder="Google" aria-label="Google search"><svg><use href="#i-search"/></svg></label>
    <i class="dd"></i><i class="sqr"></i>
    <div class="tray"><b>«</b><svg><use href="#i-batt"/></svg><svg><use href="#i-net"/></svg><svg><use href="#i-bars"/></svg><svg><use href="#i-drop"/></svg><svg><use href="#i-chrome"/></svg><svg><use href="#i-mon"/></svg><time>11:37 AM</time></div>
  </footer>
</div>
<script src="map.js"></script>
</body>
</html>
```
FILE: map.js
```
// Rasterises the survey polygons onto the grid and emits one path per colour.
const CELL = 3.27, X0 = 376, Y0 = 193, COLS = 114, ROWS = 80;
const Y = '#ffff73', O = '#ffaa00', B = '#a87000', W = '#ffffff';
const shapes = [
  [Y, '376,193 395,193 401,197 403,202 424,202 436,210 436,193 464,193 465,210 477,213 480,230 493,241 528,243 529,284 534,290 520,299 525,310 531,323 535,325 538,331 542,335 546,333 546,327 557,312 568,308 568,323 583,323 588,330 597,337 612,340 617,345 633,357 647,368 660,372 670,360 687,353 707,363 717,363 730,350 745,350 747,387 737,400 722,422 733,425 723,428 723,456 376,456'],
  [W, '447,275 455,275 457,265 462,262 465,270 474,280 447,283'],
  [W, '471,252 480,254 489,262 497,271 502,276 503,283 531,284 560,300 560,311 548,322 545,335 538,331 525,310 523,299 508,292 495,287 488,293 488,268'],
  [W, '376,429 380,433 392,449 392,456 386,456 381,443 376,438'],
  [W, '415,382 421,382 422,388 428,392 427,396 418,390'],
  [Y, '528,300 532,298 537,303 536,308 529,306'],
  [Y, '538,257 540,248 552,243 552,237 562,237 566,243 553,248 550,257'],
  [Y, '521,227 528,227 528,240 521,240'],
  [O, '376,193 388,193 391,197 394,202 397,208 402,208 407,203 427,205 433,212 460,212 462,222 458,224 458,243 453,248 447,247 448,275 435,273 428,264 390,222 383,217 376,208'],
  [O, '451,196 455,196 459,203 455,203'],
  [O, '472,216 476,216 479,229 475,229'],
  [O, '462,243 466,244 469,252 465,251'],
  [Y, '442,220 446,220 446,223 442,223'],
  [B, '389,216 393,216 393,220 389,220'],
  [B, '399,229 405,232 416,248 428,257 437,269 432,269 418,256 408,244 399,234'],
  [O, '376,286 395,303 410,317 420,337 431,355 431,368 420,378 413,368 410,360 398,345 376,321'],
  [O, '429,280 440,279 446,287 452,290 474,322 500,380 512,393 520,405 531,430 540,440 540,443 531,447 511,456 482,456 478,443 463,433 440,410 428,397 433,396 449,403 460,414 461,382 455,342 443,318 433,305 429,290'],
  [B, '446,292 451,289 463,302 474,322 492,345 495,367 500,383 518,407 530,433 531,448 522,448 505,423 495,403 488,378 480,360 460,340 449,325 448,305'],
  [O, '491,292 498,297 510,303 520,313 531,323 532,340 527,352 535,357 535,390 530,393 530,408 522,417 515,395 515,370 520,350 506,330 497,312'],
  [O, '528,408 543,410 555,423 555,432 547,435 535,426 528,418'],
  [O, '542,335 550,342 560,333 568,325 582,325 588,330 588,342 603,339 613,347 625,360 640,370 657,375 673,388 692,400 693,390 713,377 723,360 733,352 744,353 742,370 738,377 727,395 737,398 727,410 717,417 717,427 707,428 703,456 668,456 667,448 628,437 622,425 623,397 602,403 600,417 570,422 568,405 555,407 546,402 545,362 563,357 565,348 548,355 542,353'],
  [Y, '578,383 594,383 594,388 578,388'],
  [Y, '587,344 591,344 591,362 588,362'],
  [Y, '611,351 615,351 615,355 611,355'],
  [B, '624,358 640,370 648,377 647,387 641,391 624,380'],
  [B, '627,409 634,405 672,405 672,402 690,402 698,398 713,383 722,368 738,365 740,372 730,390 715,403 700,410 698,417 712,420 710,428 698,428 697,425 627,425'],
  [O, '672,408 684,412 684,418 674,414']
].map(([c, s]) => [c, s.split(' ').map(p => p.split(',').map(Number))]);

function inside(px, py, poly) {
  let hit = false;
  for (let i = 0, j = poly.length - 1; i < poly.length; j = i++) {
    const [xi, yi] = poly[i], [xj, yj] = poly[j];
    if ((yi > py) !== (yj > py) && px < (xj - xi) * (py - yi) / (yj - yi) + xi) hit = !hit;
  }
  return hit;
}

const paths = {};
for (let r = 0; r < ROWS; r++) {
  const y = Math.round(Y0 + r * CELL), h = Math.round(Y0 + (r + 1) * CELL) - y;
  for (let c = 0; c < COLS; c++) {
    const x = Math.round(X0 + c * CELL), w = Math.round(X0 + (c + 1) * CELL) - x;
    let colour = null;
    for (const [k, poly] of shapes) if (inside(x + 1.6, y + 1.6, poly)) colour = k;
    if (colour && colour !== W) paths[colour] = (paths[colour] || '') + `M${x} ${y}h${w}v${h}h-${w}z`;
  }
}
const group = document.getElementById('cells');
for (const k in paths) {
  const p = document.createElementNS('http://www.w3.org/2000/svg', 'path');
  p.setAttribute('fill', k);
  p.setAttribute('d', paths[k]);
  group.appendChild(p);
}
```
FILE: styles.css
```
:root {
  --face: #dedea0;
  --hi: #f3f3d2;
  --mid: #c8c868;
  --dark: #8a8434;
  --track: #eeeed2;
}
* { box-sizing: border-box; }
body {
  margin: 0;
  background: var(--face);
  color: #111;
  font: 7px/10px Roboto, "Liberation Sans", sans-serif;
}
button, input, select { font: inherit; color: inherit; margin: 0; padding: 0; border: 0; background: none; border-radius: 0; }
ul, h1, h2, p { margin: 0; padding: 0; list-style: none; font-size: inherit; }
i { font-style: normal; }
svg { display: block; }
.defs { position: absolute; width: 0; height: 0; }
.app { display: flex; flex-direction: column; height: 100vh; overflow: hidden; }

.titlebar { display: flex; align-items: center; flex: none; height: 11px; padding: 0 3px 0 1px; background: linear-gradient(90deg, #8c8410, #a09420 35%, #c8b04c); color: #fff; }
.titlebar h1 { flex: 1; font-size: 8px; font-weight: bold; line-height: 11px; }
.ico { width: 11px; height: 11px; }
.winbtns { display: flex; }
.winbtns button { width: 10px; height: 9px; background: var(--face); border: 1px solid; border-color: var(--hi) #55521c #55521c var(--hi); }
.winbtns .close { margin-left: 2px; }
.winbtns svg { width: 8px; height: 7px; }

.menubar { display: flex; flex: none; align-items: center; gap: 6px; height: 19px; padding-left: 7px; border-top: 1px solid var(--hi); border-bottom: 1px solid var(--mid); padding-top: 2px; }
.menubar a { color: inherit; text-decoration: none; }

.toolbar, .drawbar { display: flex; flex: none; align-items: center; overflow: hidden; border-top: 1px solid var(--hi); }
.toolbar { height: 20px; padding-left: 5px; border-bottom: 1px solid var(--mid); }
.toolbar button { flex: none; width: 15px; height: 15px; display: grid; place-items: center; }
.toolbar svg { width: 11px; height: 11px; }
.toolbar .on, .drawbar .on { background: #ececc8; border: 1px solid var(--mid); }
.sep { flex: none; width: 3px; height: 15px; border-left: 1px solid var(--mid); border-right: 1px solid var(--hi); }
.toolbar .wide { width: 4px; }
.toolbar .grip { width: 5px; margin-right: 4px; }
.combo { flex: none; display: flex; align-items: center; height: 12px; background: #fff; border: 1px solid; border-color: var(--dark) var(--hi) var(--hi) var(--dark); position: relative; }
.combo select { appearance: none; width: 100%; height: 10px; padding-left: 1px; font-size: 8px; line-height: 10px; outline: 0; }
.combo::after { content: ""; flex: none; width: 8px; height: 10px; background: linear-gradient(#333, #333) 2px 4px / 3px 1px no-repeat, linear-gradient(#333, #333) 3px 5px / 1px 1px no-repeat, var(--face); border: 1px solid; border-color: var(--hi) var(--dark) var(--dark) var(--hi); }
.scale { width: 92px; margin: 0 8px 0 4px; }
.scale select, .size select, .font select { font-size: 7px; }
.pct { width: 38px; margin-right: 6px; }

.work { flex: 1; min-height: 0; display: flex; }
.toc { flex: none; width: 196px; display: flex; flex-direction: column; border-right: 2px solid #77744a; padding: 0 4px 2px 4px; }
.dockbar { flex: none; display: flex; align-items: center; height: 13px; gap: 4px; padding-left: 1px; }
.dockbar i { flex: 1; height: 5px; border: 1px solid var(--mid); border-width: 1px 0; box-shadow: 0 1px var(--hi), inset 0 1px var(--hi); }
.dockbar svg { width: 6px; height: 6px; }
.treebox { flex: 1; min-height: 0; display: grid; grid-template: minmax(0, 1fr) 9px / minmax(0, 1fr) 9px; background: #fff; border: 1px solid #55532c; outline: 1px solid var(--mid); }
.tree { overflow: hidden; }
.tree li { height: 10px; display: flex; align-items: center; white-space: nowrap; }
.layer { padding-left: 15px; gap: 4px; }
.layer button { width: 6px; height: 6px; border: 1px solid #b0ac40; background: #ffffe0; font-size: 7px; line-height: 4px; overflow: hidden; }
.layer label { display: flex; align-items: center; gap: 5px; }
.layer input { appearance: none; width: 7px; height: 7px; border: 1px solid #333; background: #fff; }
.cls { padding-left: 37px; gap: 2px; }
.sw { width: 9px; height: 7px; border: 1px solid #8a8a8a; }
.sw.none, .sw.flat { border: 0; }
.hollow { border-color: #444; }
.tree .field { padding-left: 49px; }
.tree .ramp-row { height: 30px; padding-left: 37px; gap: 2px; align-items: stretch; }
.ramp { width: 9px; margin: 1px 0 3px; }
.hl { display: flex; flex-direction: column; justify-content: space-between; }
.hl b { font-weight: normal; }
.gray { background: linear-gradient(#bbb, #000 90%); }
.blue { background: linear-gradient(#2010e8, #d0c8ff); }
.c1 { background: #ffff73; } .c2 { background: #ffaa00; } .c3 { background: #a87000; }
.f0 { background: #90b4b0; } .f1 { background: #3000e0; } .f2 { background: #f80810; } .f3 { background: #10f850; }
.g1 { background: #ccff80; } .g2 { background: #98e600; } .g3 { background: #70a800; } .g4 { background: #4c7300; }
.tree .star { height: 20px; padding-left: 34px; }
.star svg { width: 12px; height: 12px; }

.vbar, .hbar { display: flex; background: var(--track); }
.vbar { flex-direction: column; }
.hbar { grid-column: 1; }
.vbar button, .hbar button, .thumb { flex: none; width: 9px; height: 9px; background: var(--face); border: 1px solid; border-color: var(--hi) var(--dark) var(--dark) var(--hi); }
.vbar button, .hbar button { display: grid; place-items: center; }
.up::after, .down::after, .left::after, .right::after { content: ""; border: 2px solid transparent; }
.up::after { border-bottom-color: #222; border-top: 0; }
.down::after { border-top-color: #222; border-bottom: 0; }
.left::after { border-right-color: #222; border-left: 0; }
.right::after { border-left-color: #222; border-right: 0; }
.gap-a, .gap-b, .thumb { display: block; }
.treebox .vbar .gap-a { flex: 77; } .treebox .vbar .thumb { flex: 114; } .treebox .vbar .gap-b { flex: 215; }
.treebox .hbar .thumb { flex: 149; } .treebox .hbar .gap-a { flex: 8; }

.tabs { flex: none; display: flex; height: 14px; padding-top: 1px; align-items: flex-start; }
.tabs button { height: 11px; padding: 0 4px; border: 1px solid var(--dark); border-top: 0; border-left-color: var(--hi); line-height: 10px; }
.tabs .cur { height: 13px; line-height: 13px; border-color: var(--hi) var(--dark) var(--dark) var(--hi); padding: 0 3px; }

.view { flex: 1; min-width: 0; display: grid; grid-template: 13px minmax(0, 1fr) 9px / 13px minmax(0, 1fr) 10px; border-top: 1px solid #55532c; border-left: 1px solid var(--mid); }
.hruler { grid-column: 2; grid-row: 1; width: calc(100% - 26px); height: 9px; margin: 2px 0 0 26px; border-left: 5px solid #c0bc30; box-sizing: border-box; }
.vruler { grid-column: 1; grid-row: 2; width: 9px; height: calc(100% - 7px); margin-left: 1px; border-bottom: 3px solid #c0bc30; }
.hruler g, .vruler g { font-size: 7px; fill: #444; font-family: "Liberation Sans", sans-serif; }
.desk { grid-column: 2; grid-row: 2; min-width: 0; display: flex; flex-direction: column; background: #fff; overflow: hidden; }
.page { flex: 1; min-height: 0; margin-left: 25px; border: solid #555; border-width: 0 0 1px 1px; padding: 0 0 3px 3px; }
.sheet { height: 100%; border: dashed #e4e4b0; border-width: 0 0 1px 1px; padding: 120px 0 0 27px; display: flex; }
.shade { flex: none; height: 6px; margin-left: 31px; background: #808080; }
.big.vbar { grid-column: 3; grid-row: 1 / 3; }
.big.vbar .gap-a { flex: 137; } .big.vbar .thumb { flex: 200; width: 10px; } .big.vbar .gap-b { flex: 102; }
.viewbtns { grid-column: 1 / 4; display: flex; align-items: center; padding-right: 10px; }
.viewbtns > button { flex: none; width: 10px; height: 9px; display: grid; place-items: center; }
.viewbtns > button svg { width: 8px; height: 8px; }
.viewbtns .sep { height: 8px; }
.viewbtns .hbar { flex: 1; }
.big.hbar .gap-a { flex: 137; } .big.hbar .thumb { flex: 346; } .big.hbar .gap-b { flex: 153; }

.legend { flex: none; width: 102px; padding-top: 127px; font-family: "Liberation Sans", sans-serif; color: #111; }
.legend h2 { font-size: 11px; line-height: 12px; white-space: nowrap; }
.legend ul { margin: 6px 0 0 32px; display: grid; gap: 4px; }
.legend li { display: flex; align-items: center; gap: 3px; height: 11px; font-size: 9px; }
.legend li i { width: 23px; height: 11px; border: 1px solid #777; }
.north { width: 94px; margin-top: 8px; display: grid; justify-items: center; font-size: 10px; line-height: 12px; }
.north svg { width: 15px; height: 24px; }
.scalebar { width: 76px; margin: 3px 0 0 10px; font-size: 8px; font-weight: bold; text-align: center; }
.nums { display: grid; grid-template-columns: 20px 18px 18px 56px; width: 112px; margin-left: -10px; }
.scalebar svg { width: 76px; height: 7px; margin: 2px 0; }
.map { flex: none; width: 401px; height: 281px; }

.drawbar { height: 19px; padding-left: 7px; border-bottom: 1px solid var(--mid); }
.drawbar button { flex: none; height: 15px; width: 15px; display: grid; place-items: center; }
.drawbar .txt { width: auto; display: block; }
.drawbar svg { width: 11px; height: 11px; }
.dd { flex: none; width: 0; height: 0; border: 3px solid transparent; border-top: 3px solid #111; border-bottom: 0; margin: 0 3px 0 2px; }
.drawbar .ser { font: bold 11px/12px "Liberation Serif", serif; }
.drawbar .it { font-style: italic; } .drawbar .un { text-decoration: underline; }
.drawbar .fc { border-bottom: 2px solid #000; }
.font { width: 106px; } .drawbar .font svg { width: 9px; height: 9px; flex: none; }
.size { width: 27px; margin: 0 5px; }
.end { height: 17px; border-left: 1px solid var(--mid); margin-left: 3px; }

.status { flex: none; display: flex; justify-content: flex-end; height: 12px; gap: 2px; padding: 1px 2px 1px 0; }
.status > * { border: 1px solid var(--mid); border-color: var(--mid) var(--hi) var(--hi) var(--mid); }
.status i { width: 13px; } .status .wide { width: 152px; }
.status output { width: 152px; padding-left: 1px; line-height: 9px; }

.taskbar { flex: none; display: flex; align-items: center; height: 17px; padding: 0 2px 1px; border-top: 1px solid var(--hi); gap: 2px; }
.taskbar button { display: flex; align-items: center; gap: 3px; height: 14px; padding: 0 2px; border: 1px solid; border-color: var(--hi) #77732c #77732c var(--hi); white-space: nowrap; overflow: hidden; }
.taskbar svg { flex: none; width: 10px; height: 10px; }
.taskbar .start { flex: none; width: 31px; gap: 1px; font-size: 8px; font-weight: bold; padding: 0; }
.tasks { flex: 1; min-width: 0; display: grid; grid-template-columns: repeat(5, minmax(0, 1fr)); gap: 2px; margin: 0 2px; }
.taskbar .act { font-weight: bold; background: #eeeed0; border-color: #77732c var(--hi) var(--hi) #77732c; }
.quick { flex: none; display: flex; gap: 4px; margin: 0 8px 0 5px; }
.more { width: 8px; font-size: 9px; }
.goog { flex: none; display: flex; align-items: center; width: 63px; height: 13px; background: #fff; border: 1px solid var(--mid); }
.goog input { min-width: 0; flex: 1; height: 11px; outline: 0; font: 14px/11px "Liberation Sans", sans-serif; }
.goog input::placeholder { color: #d4dcf0; opacity: 1; }
.sqr { width: 5px; height: 5px; border: 1px solid #222; border-top-width: 2px; margin-right: 4px; }
.tray { flex: none; display: flex; align-items: center; gap: 1px; height: 14px; padding: 0 3px 0 3px; border: 1px solid var(--mid); }
.tray b { width: 7px; font-size: 8px; }
.tray time { margin-left: 4px; }
```
